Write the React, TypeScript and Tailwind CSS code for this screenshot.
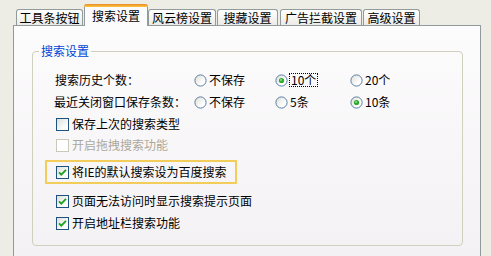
import React from "react";

function Radio({ checked }: { checked?: boolean }) {
  return (
    <svg width="13" height="13" viewBox="0 0 13 13" className="shrink-0">
      <defs>
        <linearGradient id="rg" x1="0" y1="0" x2="1" y2="1">
          <stop offset="0" stopColor="#dcdcd5" />
          <stop offset="0.7" stopColor="#ffffff" />
        </linearGradient>
      </defs>
      <circle cx="6.5" cy="6.5" r="5.6" fill="url(#rg)" stroke="#5a7ea5" strokeWidth="1" />
      {checked && (
        <>
          <circle cx="6.5" cy="6.5" r="2.6" fill="#2fa82f" />
          <circle cx="6" cy="6" r="1" fill="#8fe08f" />
        </>
      )}
    </svg>
  );
}

function Check({ checked, disabled }: { checked?: boolean; disabled?: boolean }) {
  return (
    <svg width="13" height="13" viewBox="0 0 13 13" className="shrink-0">
      <defs>
        <linearGradient id="cg" x1="0" y1="0" x2="1" y2="1">
          <stop offset="0" stopColor="#dcdcd7" />
          <stop offset="0.75" stopColor="#ffffff" />
        </linearGradient>
      </defs>
      <rect
        x="0.5"
        y="0.5"
        width="12"
        height="12"
        fill={disabled ? "#ffffff" : "url(#cg)"}
        stroke={disabled ? "#cac8bb" : "#1c5180"}
      />
      {checked && (
        <path d="M3 6.3 L5.3 8.6 L10 3.9" stroke="#21a121" strokeWidth="1.9" fill="none" />
      )}
    </svg>
  );
}

function Tab({ label, w, ml, selected }: { label: string; w: string; ml: string; selected?: boolean }) {
  if (selected) {
    return (
      <div
        className={`relative z-10 ${w} ${ml} h-[22px] mb-[-1px] rounded-t-[3px] border-x border-[#919b9c] bg-[#fcfcfe] flex flex-col`}
      >
        <div className="h-[3px] rounded-t-[3px] bg-gradient-to-b from-[#e68b2c] to-[#ffc83c] mx-[-1px]" />
        <div className="flex-1 flex items-center justify-center pb-[2px]">{label}</div>
      </div>
    );
  }
  return (
    <div
      className={`${w} ${ml} h-[16px] rounded-t-[3px] border border-b-0 border-[#919b9c] bg-gradient-to-b from-[#ffffff] to-[#ecebe6] flex items-center justify-center`}
    >
      {label}
    </div>
  );
}

export default function App() {
  return (
    <div className="w-[491px] h-[256px] overflow-hidden bg-[#eeede5] font-['Noto_Sans_CJK_SC','Liberation_Sans',sans-serif] text-[12px] leading-[14px] text-black pt-[4px] pl-[13px]">
      <div className="flex items-end h-[21px] pl-[3px]">
        <Tab label="工具条按钮" w="w-[67px]" ml="ml-0" />
        <Tab label="搜索设置" w="w-[64px]" ml="ml-[1px]" selected />
        <Tab label="风云榜设置" w="w-[68px]" ml="ml-0" />
        <Tab label="搜藏设置" w="w-[61px]" ml="ml-[1px]" />
        <Tab label="广告拦截设置" w="w-[82px]" ml="ml-[2px]" />
        <Tab label="高级设置" w="w-[57px]" ml="ml-[1px]" />
      </div>
      <div className="w-[468px] h-[240px] border border-[#919b9c] bg-gradient-to-b from-[#fdfcfd] to-[#f3f1f3] pt-[18px] pl-[18px]">
        <fieldset className="w-[431px] border border-[#d0d0bf] rounded-[4px] p-0 m-0">
          <legend className="ml-[6px] px-[2px] h-[14px] text-[#0046d5]">搜索设置</legend>
          <div className="flex flex-col pl-[22px] pt-[11px] pb-[11px]">
            <div className="flex items-center h-[22px]">
              <div className="w-[139px]">搜索历史个数：</div>
              <div className="w-[81px] flex items-center gap-[2px]">
                <Radio />
                <span>不保存</span>
              </div>
              <div className="w-[75px] flex items-center gap-[1px]">
                <Radio checked />
                <span className="border border-dotted border-black px-[1px] leading-[12px]">10个</span>
              </div>
              <div className="flex items-center gap-[2px]">
                <Radio />
                <span>20个</span>
              </div>
            </div>
            <div className="flex items-center h-[22px]">
              <div className="w-[139px] -ml-[1px] pl-0">最近关闭窗口保存条数：</div>
              <div className="w-[81px] flex items-center gap-[2px] ml-[1px]">
                <Radio />
                <span>不保存</span>
              </div>
              <div className="w-[75px] flex items-center gap-[2px]">
                <Radio />
                <span>5条</span>
              </div>
              <div className="flex items-center gap-[2px]">
                <Radio checked />
                <span>10条</span>
              </div>
            </div>
            <div className="flex items-center h-[22px] pl-[1px] gap-[3px]">
              <Check />
              <span>保存上次的搜索类型</span>
            </div>
            <div className="flex items-center h-[20px] pl-[1px] gap-[3px] text-[#aca899]">
              <Check disabled />
              <span>开启拖拽搜索功能</span>
            </div>
            <div className="mt-[5px] -ml-[10px] w-[192px] h-[24px] border-2 border-[#f2cd59] flex items-center pl-[9px] gap-[3px]">
              <Check checked />
              <span>将IE的默认搜索设为百度搜索</span>
            </div>
            <div className="mt-[6px] flex items-center h-[22px] pl-[1px] gap-[3px]">
              <Check checked />
              <span>页面无法访问时显示搜索提示页面</span>
            </div>
            <div className="flex items-center h-[22px] pl-[1px] gap-[3px]">
              <Check checked />
              <span>开启地址栏搜索功能</span>
            </div>
          </div>
        </fieldset>
      </div>
    </div>
  );
}
